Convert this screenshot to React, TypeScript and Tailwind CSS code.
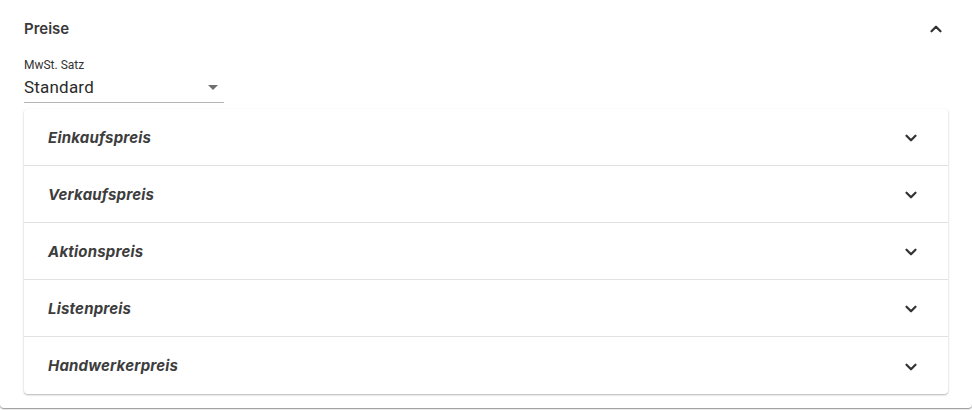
import { ChevronDown, ChevronUp } from "lucide-react"

const prices = ["Einkaufspreis", "Verkaufspreis", "Aktionspreis", "Listenpreis", "Handwerkerpreis"]

export default function App() {
    return (
        <div className="min-h-[410px] w-[972px] bg-white font-['Inter',sans-serif]">
            <div className="rounded-b-[4px] bg-white shadow-[0_1px_1.5px_rgba(0,0,0,0.45)]">
                <div className="flex h-[58px] items-center justify-between pl-6 pr-[27px]">
                    <h2 className="text-[15px] font-semibold text-[#3a3a3a]">Preise</h2>
                    <ChevronUp className="h-[18px] w-[18px] text-[#333]" strokeWidth={3} />
                </div>

                <div className="px-6 pb-[14px]">
                    <div className="w-[200px]">
                        <label className="block font-['Roboto',sans-serif] text-[12px] leading-[15px] text-[#333]">
                            MwSt. Satz
                        </label>
                        <div className="flex h-[30px] items-center justify-between border-b border-[#b5b5b5]">
                            <span className="font-['Roboto',sans-serif] text-[17px] tracking-[0.2px] text-[#2b2b2b]">Standard</span>
                            <span className="mr-[6px] h-0 w-0 border-x-[5px] border-t-[5px] border-x-transparent border-t-[#6f6f6f]" />
                        </div>
                    </div>

                    <div className="mt-[6px] rounded-[4px] bg-white shadow-[0_1px_2px_rgba(0,0,0,0.3)]">
                        {prices.map((p, i) => (
                            <div
                                key={p}
                                className={`flex h-[57px] items-center justify-between pl-6 pr-[28px] pt-[2px] ${i < prices.length - 1 ? "border-b border-[#e2e2e2]" : ""}`}
                            >
                                <span className="text-[15px] font-bold italic tracking-[0.2px] text-[#3d3d3d]">{p}</span>
                                <ChevronDown className="h-[18px] w-[18px] text-[#333]" strokeWidth={3} />
                            </div>
                        ))}
                    </div>
                </div>
            </div>
        </div>
    )
}
